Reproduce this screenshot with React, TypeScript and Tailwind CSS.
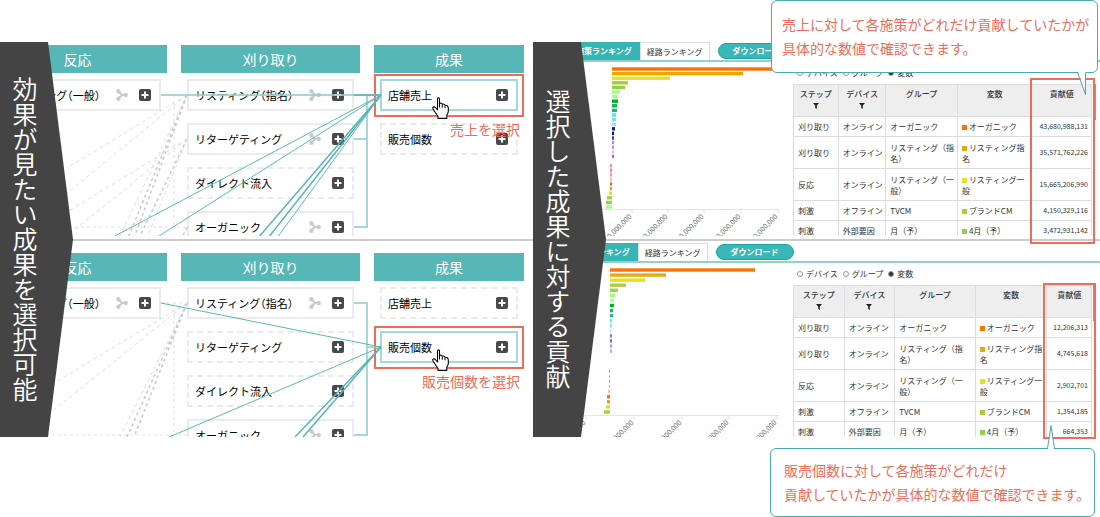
import clsx from 'clsx'

interface FlowItem {
  label: string
  solid?: boolean
  share?: boolean
  selected?: boolean
  note?: string
}

interface Line {
  d: string
  kind: 'teal' | 'tealBold' | 'elbow' | 'gray' | 'grayBold' | 'grayElbow'
}

interface Row {
  step: string
  device: string
  group: string
  variable: string
  color: string
  value: string
}

interface Bar {
  at: number
  size: number
  color: string
}

const LINE_STYLES = {
  teal: { stroke: '#5cb9b8', strokeWidth: 1 },
  tealBold: { stroke: '#57b5b4', strokeWidth: 1.5 },
  elbow: { stroke: '#8fcfce', strokeWidth: 2, strokeOpacity: 0.8 },
  gray: { stroke: '#dedede', strokeWidth: 1, strokeDasharray: '4 3' },
  grayBold: { stroke: '#cbcbcb', strokeWidth: 1.6, strokeDasharray: '3 3' },
  grayElbow: { stroke: '#ebebeb', strokeWidth: 1.5, strokeDasharray: '3 3' },
}

const SALES_LINES: Line[] = [
  { d: 'M187 53 67 126', kind: 'gray' },
  { d: 'M187 53 66 152', kind: 'gray' },
  { d: 'M187 97 70 168', kind: 'gray' },
  { d: 'M187 97 72 190', kind: 'gray' },
  { d: 'M187 97 139 196', kind: 'grayBold' },
  { d: 'M187 97 147 196', kind: 'gray' },
  { d: 'M187 53 119 196', kind: 'gray' },
  { d: 'M187 53 128 196', kind: 'grayBold' },
  { d: 'M187 53 134 196', kind: 'grayBold' },
  { d: 'M187 185 182 196', kind: 'grayBold' },
  { d: 'M174 53V185M75 185H187', kind: 'grayElbow' },
  { d: 'M161 53H381', kind: 'elbow' },
  { d: 'M354 97H367V53H381M367 97V185H354', kind: 'elbow' },
  { d: 'M354 53H381', kind: 'tealBold' },
  { d: 'M381 53 115 194', kind: 'teal' },
  { d: 'M381 53 159 194', kind: 'teal' },
  { d: 'M381 53 258 196', kind: 'tealBold' },
  { d: 'M381 53 268 196', kind: 'tealBold' },
  { d: 'M381 53 277 196', kind: 'teal' },
]

const COUNT_LINES: Line[] = [
  { d: 'M187 62 56 141', kind: 'gray' },
  { d: 'M187 62 54 169', kind: 'gray' },
  { d: 'M187 62 120 196', kind: 'gray' },
  { d: 'M187 62 127 196', kind: 'grayBold' },
  { d: 'M187 62 134 196', kind: 'grayBold' },
  { d: 'M161 62H187M174 62V194M52 194H187', kind: 'grayElbow' },
  { d: 'M354 62H367V106H381M367 106V194H354', kind: 'elbow' },
  { d: 'M161 62 381 106', kind: 'teal' },
  { d: 'M381 106 169 196', kind: 'teal' },
  { d: 'M381 106 295 196', kind: 'tealBold' },
  { d: 'M381 106 303 196', kind: 'tealBold' },
]

const SALES_COLUMNS: { title: string; items: FlowItem[] }[] = [
  { title: '反応', items: [{ label: 'リスティング（一般）', solid: true, share: true }] },
  {
    title: '刈り取り',
    items: [
      { label: 'リスティング（指名）', solid: true, share: true },
      { label: 'リターゲティング', solid: true, share: true },
      { label: 'ダイレクト流入' },
      { label: 'オーガニック', solid: true, share: true },
    ],
  },
  {
    title: '成果',
    items: [{ label: '店舗売上', selected: true, note: '売上を選択' }, { label: '販売個数' }],
  },
]

const COUNT_COLUMNS: { title: string; items: FlowItem[] }[] = [
  { title: '反応', items: [{ label: 'リスティング（一般）', solid: true, share: true }] },
  {
    title: '刈り取り',
    items: [
      { label: 'リスティング（指名）', solid: true, share: true },
      { label: 'リターゲティング' },
      { label: 'ダイレクト流入' },
      { label: 'オーガニック', solid: true, share: true },
    ],
  },
  {
    title: '成果',
    items: [{ label: '店舗売上' }, { label: '販売個数', selected: true, note: '販売個数を選択' }],
  },
]

const makeRows = (values: string[]): Row[] => [
  { step: '刈り取り', device: 'オンライン', group: 'オーガニック', variable: 'オーガニック', color: '#ff7300', value: values[0] },
  { step: '刈り取り', device: 'オンライン', group: 'リスティング（指\n名）', variable: 'リスティング指\n名', color: '#e8a90c', value: values[1] },
  { step: '反応', device: 'オンライン', group: 'リスティング（一\n般）', variable: 'リスティング一\n般', color: '#e6e022', value: values[2] },
  { step: '刺激', device: 'オフライン', group: 'TVCM', variable: 'ブランドCM', color: '#a9d02f', value: values[3] },
  { step: '刺激', device: '外部要因', group: '月（予）', variable: '4月（予）', color: '#8ed14c', value: values[4] },
]

const SALES_ROWS = makeRows(['43,680,988,131', '35,571,762,226', '15,665,206,990', '4,150,329,116', '3,472,931,142'])
const COUNT_ROWS = makeRows(['12,206,313', '4,745,618', '2,902,701', '1,354,185', '664,353'])

const toBars = (list: [number, number, string][]): Bar[] =>
  list.map(([at, size, color]) => ({ at, size, color }))

const SALES_BARS = toBars([
  [0, 161, '#ff6f00'], [1, 131, '#e8a800'], [2, 58, '#e8e020'], [3, 16, '#a9cf2c'], [4, 13, '#92d050'],
  [5, 8, '#9dff7a'], [6, 6, '#a4ff9a'], [7, 6, '#00b31a'], [8, 5, '#10b552'], [9, 5, '#14b97e'],
  [10, 4, '#38f0e4'], [11, 4, '#7fdcf0'], [12, 4, '#a8dcff'], [13, 3, '#142a72'], [14, 2, '#0a1070'],
  [15, 2, '#3a2ee0'], [16, 2, '#a58af0'], [17, 2, '#b49ae6'], [18, 2, '#ecb4ff'], [19, 2, '#d04cd0'],
  [21, -2, '#f58ab8'], [22, -2, '#f07a90'], [23, -2, '#f0989c'], [24, -2, '#f8c0b4'], [25, -2, '#f06a10'],
  [26, -2, '#e0a010'], [27, -3, '#e6dc20'], [28, -5, '#b0cf38'], [29, -6, '#90d050'], [30, -6, '#a0ff80'],
])

const COUNT_BARS = toBars([
  [0, 145, '#ff7300'], [1, 56, '#e8ab12'], [2, 35, '#e6e022'], [3, 16, '#b2cf38'], [4, 8, '#9ad24c'],
  [5, 5, '#a0ff80'], [6, 4, '#aaffa0'], [7, 4, '#00b81c'], [8, 3, '#14b856'], [9, 3, '#20bd88'],
  [10, 2, '#50eee4'], [11, 2, '#8ee0f0'], [12, 1, '#b0e0ff'], [13, 2, '#7080b8'], [14, 2, '#7474b8'],
  [15, 2, '#aa9cf0'], [16, 2, '#bcaaf0'], [20, -1, '#f080d8'], [21, -1, '#f490b4'], [22, -1, '#f08c98'],
  [23, -1, '#f0a0a0'], [24, -2, '#f4c4b8'], [25, -3, '#f07010'], [26, -3, '#e0a418'], [27, -4, '#e0dc28'],
  [28, -6, '#b2d03a'],
])

const ShareIcon = () => (
  <svg width="12" height="12" viewBox="0 0 12 12" className="shrink-0" aria-hidden="true">
    <path d="M2.5 2.5 6 6 2.5 9.5M5 6H10" fill="none" stroke="#cbcbcb" strokeWidth="2.2" />
    <circle cx="2.4" cy="2.3" r="2.2" fill="#cbcbcb" />
    <circle cx="2.4" cy="9.7" r="2.2" fill="#cbcbcb" />
    <circle cx="9.7" cy="6" r="2.2" fill="#cbcbcb" />
  </svg>
)

const PlusIcon = () => (
  <svg width="12" height="12" viewBox="0 0 12 12" aria-hidden="true">
    <rect width="12" height="12" rx="2" fill="#4a484c" />
    <path d="M6 2.5v7M2.5 6h7" stroke="#fff" strokeWidth="2" />
  </svg>
)

const HandCursor = () => (
  <svg width="17" height="22" viewBox="0 0 17 22" className="absolute left-[50px] top-4 z-20" aria-hidden="true">
    <path
      d="M5.5 1.5Q6.5 0 7.5 1.5V6.5Q9.5 5.5 10.3 7.3 12 6.5 13 8.3 16 7.8 16.3 11V14.5Q16.3 16 14.8 18V21.4H6V19.5L2.5 14.3Q.6 11.8.7 10.5 2 9 3.8 11L5.5 13Z"
      fill="#fff"
      stroke="#000"
      strokeWidth="1.1"
      strokeLinejoin="round"
    />
    <path d="M7.5 6.5v4M10.3 7.5v3.2M13 8.5v2.8" fill="none" stroke="#000" strokeWidth="1" />
  </svg>
)

const FilterIcon = () => (
  <svg width="6" height="6" viewBox="0 0 6 6" className="mx-auto mt-1" aria-hidden="true">
    <path d="M0 0h6L3.8 2.6V6L2.2 5V2.6Z" fill="#222" />
  </svg>
)

const FlowBox = ({ item }: { item: FlowItem }) => (
  <li
    className={clsx(
      'relative flex h-8 items-center border-2 pr-2 pl-[6px]',
      item.selected && 'z-10 border-[#a5d9d8] bg-white',
      !item.selected && item.solid && 'border-[#ebebeb]',
      !item.selected && !item.solid && 'border-dashed border-[#ebebeb]',
    )}
  >
    <span className="flex-1 text-[11px] leading-4 whitespace-nowrap text-black [font-feature-settings:'halt']">
      {item.label}
    </span>
    {item.share && <ShareIcon />}
    <button type="button" aria-label={`${item.label}を追加`} className="ml-[11px] size-3">
      <PlusIcon />
    </button>
    {item.selected && (
      <>
        <div className="absolute -inset-x-2 -top-[7px] -bottom-2 border-2 border-[#ec6d5a]" />
        <HandCursor />
        <span className="absolute top-full -right-1 mt-3 text-sm leading-4 whitespace-nowrap text-[#ec6d5a]">
          {item.note}
        </span>
      </>
    )}
  </li>
)

interface FlowPaneProps {
  columns: { title: string; items: FlowItem[] }[]
  lines: Line[]
  className: string
}

const FlowPane = ({ columns, lines, className }: FlowPaneProps) => (
  <div className={clsx('relative overflow-hidden', className)}>
    <div className="-ml-3 grid grid-cols-[179fr_179fr_150fr] gap-[14px] pr-[9px]">
      {columns.map((column) => (
        <section key={column.title}>
          <h2 className="h-7 bg-[#57b7b6] text-center text-sm leading-7 text-white">{column.title}</h2>
          <ul className="mt-[6px] space-y-3 px-[6px]">
            {column.items.map((item) => (
              <FlowBox key={item.label} item={item} />
            ))}
          </ul>
        </section>
      ))}
    </div>
    <svg
      viewBox="0 0 533 196"
      preserveAspectRatio="none"
      className="pointer-events-none absolute top-0 left-0 z-10 h-[196px] w-full"
      aria-hidden="true"
    >
      {lines.map((line) => (
        <path key={line.d} d={line.d} fill="none" {...LINE_STYLES[line.kind]} />
      ))}
    </svg>
  </div>
)

interface RankingChartProps {
  bars: Bar[]
  base: number
  start: number
  pitch: number
  axis: number
  ticks: { x: number; label: string }[]
}

const RankingChart = ({ bars, base, start, pitch, axis, ticks }: RankingChartProps) => (
  <svg width="260" height="175" className="shrink-0" role="img" aria-label="貢献値ランキング">
    {bars.map((bar) => (
      <rect
        key={bar.at}
        x={bar.size < 0 ? base + bar.size : base}
        y={start + bar.at * pitch - 1.7}
        width={Math.abs(bar.size)}
        height="3.4"
        fill={bar.color}
      />
    ))}
    <path d={`M40 ${axis + 0.5}H246`} stroke="#e6e6e6" />
    {ticks.map((tick) => (
      <g key={tick.label}>
        <path d={`M${tick.x} ${axis}v4`} stroke="#e0e0e0" />
        <text
          transform={`translate(${tick.x} ${axis + 8}) rotate(-45)`}
          textAnchor="end"
          className="fill-[#666] text-[7px]"
        >
          {tick.label}
        </text>
      </g>
    ))}
  </svg>
)

interface RankingPaneProps {
  name: string
  rows: Row[]
  colWidths: string[]
  chart: RankingChartProps
  className: string
  tabInset: string
}

const RankingPane = ({ name, rows, colWidths, chart, className, tabInset }: RankingPaneProps) => (
  <div className={clsx('overflow-hidden', className)}>
    <div className={clsx('flex h-5 items-stretch border-b-2 border-[#8fd3d1] text-[8px]', tabInset)}>
      <button type="button" className="bg-[#35b5b4] px-2 font-bold whitespace-nowrap text-white">
        施策ランキング
      </button>
      <button type="button" className="border border-b-0 border-[#ddd] px-[6px] whitespace-nowrap text-[#333]">
        経路ランキング
      </button>
      <button
        type="button"
        className="my-px ml-2 rounded-full border border-[#1fa3a2] bg-[#3ab7b6] px-[14px] font-bold whitespace-nowrap text-white"
      >
        ダウンロード
      </button>
    </div>
    <div className="flex">
      <RankingChart {...chart} />
      <div className="relative min-w-0 flex-1 pr-2">
        <fieldset className="flex h-[22px] items-center gap-[5px] pl-1 text-[8px] text-[#333]">
          {['デバイス', 'グループ', '変数'].map((label) => (
            <label key={label} className="flex items-center gap-[3px]">
              <input
                type="radio"
                name={name}
                defaultChecked={label === '変数'}
                className="size-[6px] appearance-none rounded-full border border-[#999] checked:bg-[#333]"
              />
              {label}
            </label>
          ))}
        </fieldset>
        <table className="w-full table-fixed border-collapse text-[8px] leading-[11px] text-[#333]">
          <colgroup>
            {colWidths.map((width, i) => (
              <col key={i} className={width} />
            ))}
          </colgroup>
          <thead>
            <tr className="h-8 bg-[#eee] align-top">
              {['ステップ', 'デバイス', 'グループ', '変数', '貢献値'].map((head, i) => (
                <th key={head} className="border border-[#ddd] pt-[3px] font-medium">
                  {head}
                  {i < 2 && <FilterIcon />}
                </th>
              ))}
            </tr>
          </thead>
          <tbody>
            {rows.map((row) => (
              <tr key={row.value} className={row.group.includes('\n') ? 'h-8' : 'h-5'}>
                <td className="border border-[#ddd] pl-1">{row.step}</td>
                <td className="border border-[#ddd] pl-1 whitespace-nowrap">{row.device}</td>
                <td className="border border-[#ddd] pl-1 whitespace-pre">{row.group}</td>
                <td className="border border-[#ddd] pl-1 whitespace-pre">
                  <span className="mr-[2px] inline-block size-[5px]" style={{ background: row.color }} />
                  {row.variable}
                </td>
                <td className="border border-[#ddd] pr-[3px] text-right text-[7px] whitespace-nowrap">{row.value}</td>
              </tr>
            ))}
          </tbody>
        </table>
        <div className="absolute top-[22px] right-1 h-9 w-[3px] bg-[#999]" />
      </div>
    </div>
  </div>
)

const Banner = ({ text, className }: { text: string; className: string }) => (
  <div
    className={clsx(
      'absolute inset-y-0 left-0 z-20 w-[73px] bg-[#444] [clip-path:polygon(0_0,48px_0,100%_50%,48px_100%,0_100%)]',
      className,
    )}
  >
    <h1 className="ml-3 text-[25px] leading-[26px] font-[350] whitespace-nowrap text-white [writing-mode:vertical-rl]">
      {text}
    </h1>
  </div>
)

const App = () => (
  <main className="relative bg-white pt-[42px] pb-20 font-['Noto_Sans_CJK_JP',sans-serif]">
    <div className="grid grid-cols-[533fr_567fr]">
      <div className="relative min-w-0">
        <FlowPane columns={SALES_COLUMNS} lines={SALES_LINES} className="h-[194px] pt-[3px]" />
        <div className="mt-[3px] h-[2px] bg-[#ccc]" />
        <FlowPane columns={COUNT_COLUMNS} lines={COUNT_LINES} className="h-[196px] pt-3" />
        <Banner text="効果が見たい成果を選択可能" className="pt-[35px]" />
      </div>

      <div className="relative min-w-0">
        <RankingPane
          name="sales-axis"
          rows={SALES_ROWS}
          colWidths={['w-[15%]', 'w-[16%]', 'w-[24%]', 'w-[25%]', 'w-[20%]']}
          className="h-[194px]"
          tabInset="pl-[35px]"
          chart={{
            bars: SALES_BARS,
            base: 79,
            start: 7,
            pitch: 4.6,
            axis: 147,
            ticks: [
              { x: 99, label: '5,000,000,000' },
              { x: 135, label: '15,000,000,000' },
              { x: 171, label: '25,000,000,000' },
              { x: 208, label: '35,000,000,000' },
              { x: 245, label: '45,000,000,000' },
            ],
          }}
        />
        <div className="mt-[3px] h-[2px] bg-[#ccc]" />
        <RankingPane
          name="count-axis"
          rows={COUNT_ROWS}
          colWidths={['w-[17%]', 'w-[17%]', 'w-[27%]', 'w-[24%]', 'w-[15%]']}
          className="h-[196px] pt-[2px]"
          tabInset="pl-[33px]"
          chart={{
            bars: COUNT_BARS,
            base: 77,
            start: 7,
            pitch: 5.07,
            axis: 152,
            ticks: [
              { x: 53, label: '-2,000,000' },
              { x: 101, label: '2,000,000' },
              { x: 149, label: '6,000,000' },
              { x: 196, label: '10,000,000' },
              { x: 244, label: '14,000,000' },
            ],
          }}
        />
        <div className="absolute top-9 right-[5px] h-[166px] w-[65px] border-2 border-[#ec6d5a]" />
        <div className="absolute top-[241px] right-1 h-[156px] w-[53px] border-2 border-[#ec6d5a]" />
        <Banner text="選択した成果に対する貢献" className="pt-[47px]" />
      </div>
    </div>

    <div className="absolute top-0 right-[2px] z-30 h-[73px] w-[327px] rounded-md border border-[#4aabaa] bg-white pt-[11px] pl-[10px] text-sm leading-6 whitespace-nowrap text-[#ec6d5a]">
      <p>売上に対して各施策がどれだけ貢献していたかが</p>
      <p>具体的な数値で確認できます。</p>
      <svg width="10" height="24" viewBox="0 0 10 24" className="absolute top-[70px] right-[10px]" aria-hidden="true">
        <path d="M1 0 9 23V0" fill="#fff" />
        <path d="M.5 1.5 8.5 23.5V1.5" fill="none" stroke="#4aabaa" />
      </svg>
    </div>

    <div className="absolute right-[5px] bottom-0 z-30 h-[69px] w-[325px] rounded-md border border-[#4aabaa] bg-white pt-[9px] pl-[13px] text-sm leading-6 whitespace-nowrap text-[#ec6d5a]">
      <p>販売個数に対して各施策がどれだけ</p>
      <p>貢献していたかが具体的な数値で確認できます。</p>
      <svg width="8" height="25" viewBox="0 0 8 25" className="absolute -top-6 right-[39px]" aria-hidden="true">
        <path d="M1 25 4 1 7 25" fill="#fff" />
        <path d="M.5 23.5 4 .5 7.5 23.5" fill="none" stroke="#4aabaa" />
      </svg>
    </div>
  </main>
)

export default App
